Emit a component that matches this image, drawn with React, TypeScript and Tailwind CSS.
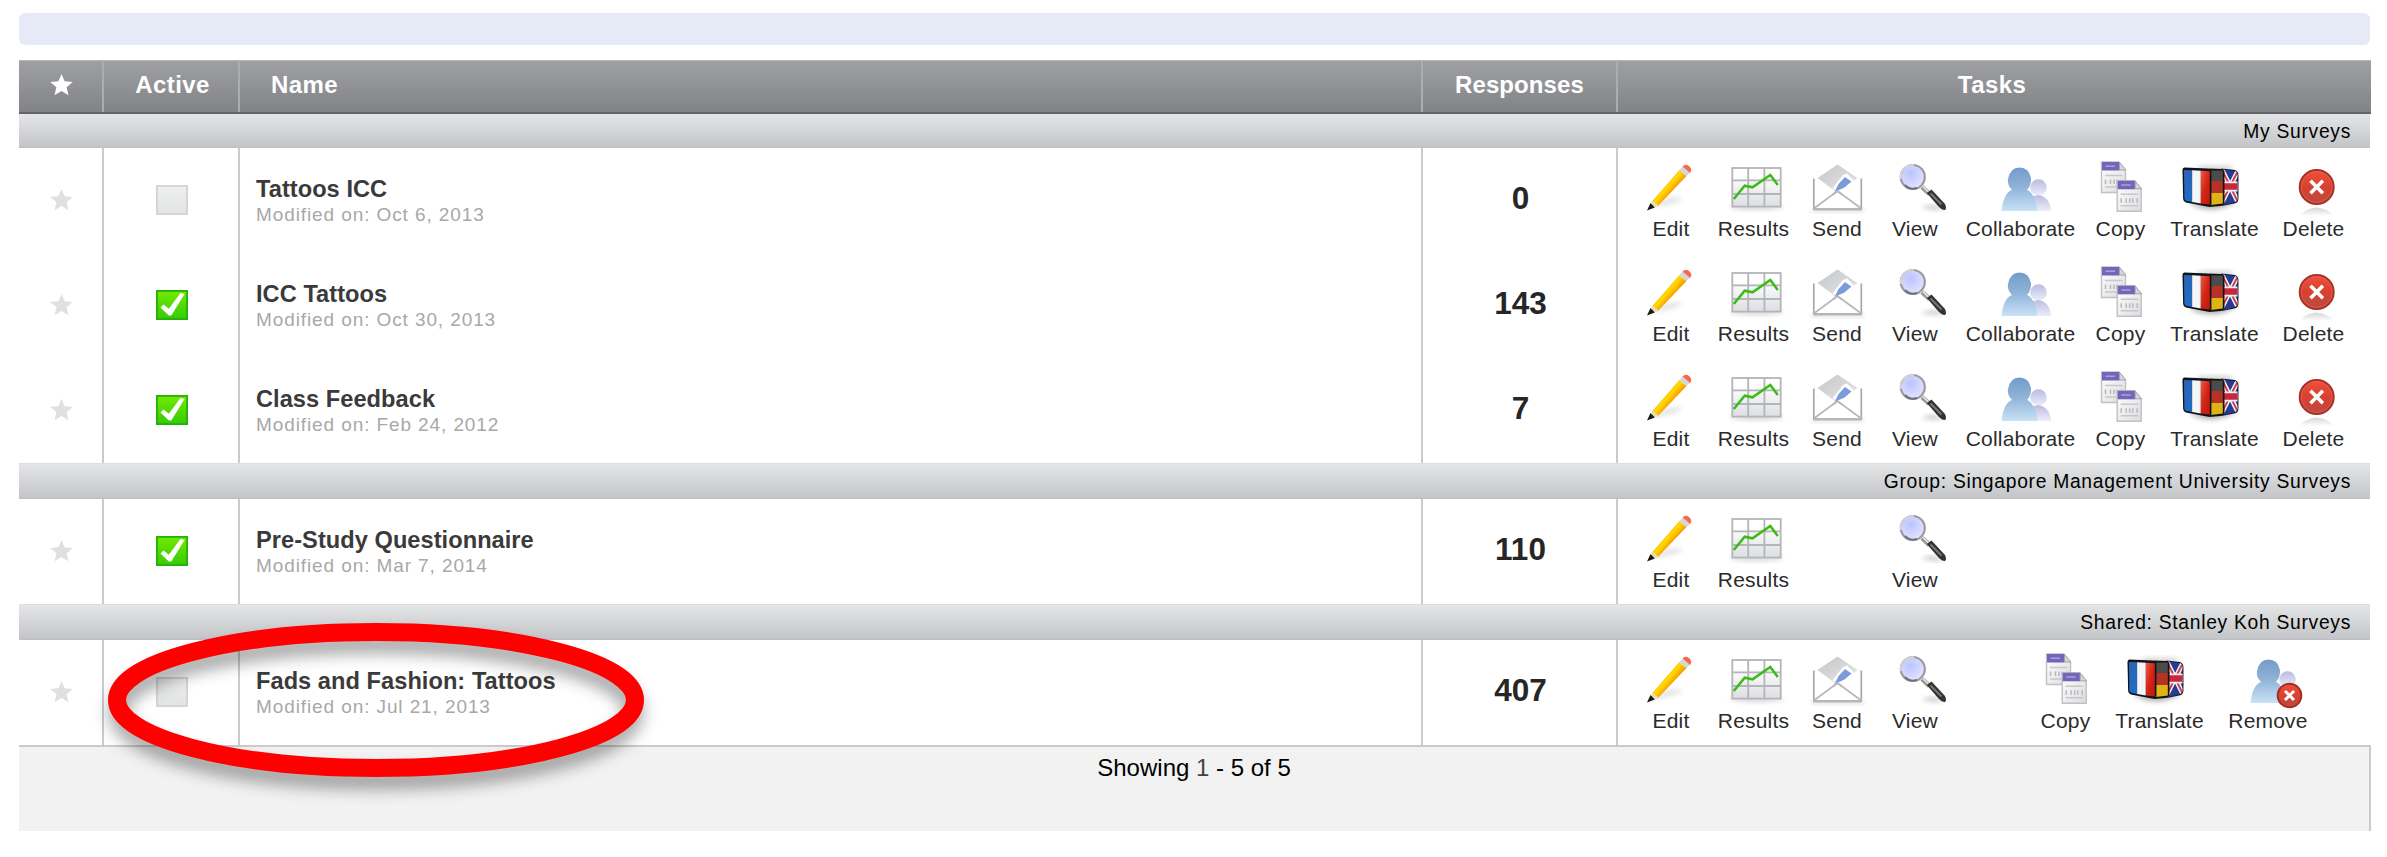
import React from "react";

type TaskName =
  | "Edit" | "Results" | "Send" | "View" | "Collaborate" | "Copy" | "Translate" | "Delete" | "Remove";

function Defs() {
  return (
    <svg className="absolute h-0 w-0" aria-hidden="true">
      <defs>
        <linearGradient id="pencil" gradientUnits="userSpaceOnUse" x1="26" y1="25" x2="34" y2="32">
          <stop offset="0" stopColor="#f2b400" />
          <stop offset="0.35" stopColor="#ffdc00" />
          <stop offset="0.6" stopColor="#ffc400" />
          <stop offset="1" stopColor="#f59a00" />
        </linearGradient>
        <linearGradient id="grid" x1="0" y1="0" x2="0" y2="1">
          <stop offset="0.2" stopColor="#ffffff" />
          <stop offset="1" stopColor="#dddee2" />
        </linearGradient>
        <linearGradient id="paper" x1="0" y1="0" x2="1" y2="1">
          <stop offset="0" stopColor="#c4c6c8" />
          <stop offset="1" stopColor="#e6e7e8" />
        </linearGradient>
        <radialGradient id="lens" cx="0.4" cy="0.35" r="0.7">
          <stop offset="0" stopColor="#b9c4ff" />
          <stop offset="1" stopColor="#e6e5ff" />
        </radialGradient>
        <linearGradient id="person" x1="0" y1="0" x2="0" y2="1">
          <stop offset="0" stopColor="#749cc9" />
          <stop offset="0.45" stopColor="#8fb2d8" />
          <stop offset="1" stopColor="#c8e2f6" />
        </linearGradient>
        <linearGradient id="friend" x1="0" y1="0" x2="0" y2="1">
          <stop offset="0" stopColor="#b9bce0" />
          <stop offset="1" stopColor="#eeedfb" />
        </linearGradient>
        <linearGradient id="sheet" x1="0" y1="0" x2="1" y2="1">
          <stop offset="0" stopColor="#ffffff" />
          <stop offset="1" stopColor="#dcdcdf" />
        </linearGradient>
        <linearGradient id="red" x1="0" y1="0" x2="0" y2="1">
          <stop offset="0" stopColor="#f0503c" />
          <stop offset="0.5" stopColor="#d8412f" />
          <stop offset="1" stopColor="#b94a40" />
        </linearGradient>
        <linearGradient id="mirror" x1="0" y1="0" x2="0" y2="1">
          <stop offset="0" stopColor="#d4d6d8" />
          <stop offset="1" stopColor="#ffffff" />
        </linearGradient>
        <linearGradient id="blueStripe" x1="0" y1="0" x2="0" y2="1">
          <stop offset="0" stopColor="#2a63b4" />
          <stop offset="1" stopColor="#1d6ec4" />
        </linearGradient>
        <linearGradient id="redStripe" x1="0" y1="0" x2="1" y2="1">
          <stop offset="0" stopColor="#ee5a4c" />
          <stop offset="0.5" stopColor="#d42414" />
          <stop offset="1" stopColor="#c01808" />
        </linearGradient>
        <linearGradient id="tick" x1="0" y1="0" x2="0" y2="1">
          <stop offset="0" stopColor="#72ea00" />
          <stop offset="1" stopColor="#35cb08" />
        </linearGradient>
        <linearGradient id="untick" x1="0" y1="0" x2="0" y2="1">
          <stop offset="0" stopColor="#efefef" />
          <stop offset="1" stopColor="#e1e3e4" />
        </linearGradient>
        <filter id="soft" x="-50%" y="-50%" width="200%" height="200%">
          <feGaussianBlur stdDeviation="2.4" />
        </filter>
        <clipPath id="flagClip">
          <path d="M42 10.5 L55 12 Q57.5 13 57.5 16 V40 Q57 43 54 43.5 L42 46Z" />
        </clipPath>
      </defs>
    </svg>
  );
}

function People() {
  return (
    <>
      <circle cx="49.5" cy="28.5" r="8.3" fill="url(#friend)" />
      <path d="M36 52 Q38 37 49 36 Q60 37 62.5 52Z" fill="url(#friend)" />
      <path d="M12.5 52 Q14.5 34 23 31 Q18 26 19 20 Q21 8.5 30.5 8.5 Q40 8.5 42 19 Q42.5 26 38 31 Q46 34 48.5 52Z" fill="url(#person)" />
    </>
  );
}

function Sheet({ x, y }: { x: number; y: number }) {
  return (
    <g transform={`translate(${x} ${y})`}>
      <path d="M0.5 0.5 H18 L24.5 9 V31 H0.5Z" fill="url(#sheet)" stroke="#c0c0c5" strokeWidth="1.4" />
      <rect x="1" y="0.5" width="17.5" height="8.5" fill="#7465b8" />
      <path d="M4.5 4.7 H14" stroke="#b4aadf" strokeWidth="1.3" />
      <path d="M18.5 1 V8.5 H25Z" fill="#d6d6da" stroke="#a4a4aa" />
      <path d="M4 14 H21.5 M4 25.5 H21.5" stroke="#c8c8cc" strokeWidth="1.5" />
      <path d="M4.5 18 V22.5 M9.5 18 V22.5 M13 18 V22.5 M16 18 V22.5 M20.5 18 V22.5" stroke="#b9b9bd" strokeWidth="1.5" />
    </g>
  );
}

function Drawing({ name }: { name: TaskName }) {
  switch (name) {
    case "Edit":
      return (
        <>
          <path d="M12 48 Q30 36 44 39 Q36 46 12 48Z" fill="#000" opacity="0.12" filter="url(#soft)" />
          <path d="M12.5 43 L40.5 11 L47.5 17 L18.5 47.5Z" fill="url(#pencil)" />
          <path d="M13.5 41.8 L20 46.8 L10.5 50.5Z" fill="#e9dfb4" />
          <path d="M8 51.5 L11.5 44 L15.8 48.6Z" fill="#1c1a18" />
          <path d="M40.5 11 L43.5 7.5 L51 14 L47.5 17Z" fill="#d3d6dc" />
          <path d="M43.5 7.5 Q46.5 4.5 50 7 Q54 10.5 51 14Z" fill="#f7694e" />
        </>
      );
    case "Results":
      return (
        <>
          <ellipse cx="34.5" cy="48" rx="27" ry="3" fill="#000" opacity="0.16" filter="url(#soft)" />
          <rect x="10.3" y="9" width="48.4" height="38.6" fill="url(#grid)" stroke="#b4b5ba" strokeWidth="1.8" />
          <path d="M26.2 9 V47.6 M42.4 9 V47.6 M10.3 21.3 H58.7 M10.3 35 H58.7" stroke="#b4b5ba" strokeWidth="1.8" />
          <path d="M11.8 40 L22.7 26.7 L30.5 28.3 L48.3 16 L55.8 26" fill="none" stroke="#38bd14" strokeWidth="2.5" />
        </>
      );
    case "Send":
      return (
        <>
          <rect x="6" y="50" width="53" height="3" fill="#000" opacity="0.14" filter="url(#soft)" />
          <path d="M12.5 19 L32.5 5.5 L52.5 19 L32.5 34Z" fill="url(#paper)" />
          <path d="M8.8 19.5 V50 H56.3 V19.5" fill="none" stroke="#a6a8aa" strokeWidth="1.7" />
          <path d="M8.8 49.5 L32.5 32 L56.3 49.5" fill="#fff" stroke="#b6b8ba" strokeWidth="1.8" />
          <path d="M8.5 50.2 H56.5" stroke="#b4b6b8" strokeWidth="2.4" />
          <path d="M27.5 29.5 L38 16 L42 14.5 L49 21.5 L35 34Z" fill="#fff" />
          <path d="M29.5 33 L33.5 25 L40 18 L46.5 22.5 L39.5 28.5Z" fill="#7d9bdc" />
          <path d="M28 35.5 L32.5 32 L37 35.5" fill="none" stroke="#b6b8ba" strokeWidth="1.8" />
        </>
      );
    case "View":
      return (
        <>
          <path d="M38 49 Q50 43 61 51Z" fill="#000" opacity="0.28" filter="url(#soft)" />
          <path d="M39 28 L46.5 35" stroke="#999" strokeWidth="4.5" />
          <path d="M40 27.5 L46 33.5" stroke="#ececec" strokeWidth="1.6" />
          <path d="M43.8 34 L48.5 30.5 L62 45 Q64 49.5 62 51 Q59.5 51.5 55.5 47.5Z" fill="#333" />
          <path d="M47.5 34.5 L58.5 45.5" stroke="#7a7a7a" strokeWidth="1.8" />
          <circle cx="29.8" cy="18" r="12" fill="url(#lens)" stroke="#9a9b9e" strokeWidth="2.2" />
          <path d="M18 20 A12 12 0 0 1 31 6.2" fill="none" stroke="#d4d5d8" strokeWidth="2" />
          <path d="M22 26 A11.5 11.5 0 0 0 34 29" fill="none" stroke="#707175" strokeWidth="2" />
        </>
      );
    case "Collaborate":
      return <People />;
    case "Remove":
      return (
        <g transform="translate(2 0)">
          <People />
          <circle cx="51.5" cy="44.5" r="11.8" fill="url(#red)" stroke="#a52d22" strokeWidth="2" />
          <path d="M47 40 L56 49 M56 40 L47 49" stroke="#fff" strokeWidth="3" />
        </g>
      );
    case "Copy":
      return (
        <>
          <Sheet x={12} y={2.5} />
          <Sheet x={27.7} y={21.3} />
        </>
      );
    case "Translate":
      return (
        <g transform="translate(-1 0) scale(0.965 1)">
          <path d="M6 44 Q32 58 58 42Z" fill="#000" opacity="0.3" filter="url(#soft)" />
          <path d="M20 7 H50 L54 12 H10Z" fill="#000" opacity="0.18" filter="url(#soft)" />
          <path d="M41 9.5 L55 11 Q58.5 12.5 58.5 16 V40 Q58 44 54 44.5 L41 47Z" fill="#171724" />
          <g clipPath="url(#flagClip)">
            <rect x="42" y="10" width="16" height="36" fill="#253c92" />
            <path d="M41 44 L58 12 M41 10 L58 43" stroke="#f5f2f5" strokeWidth="5" />
            <path d="M41 44 L58 12 M41 10 L58 43" stroke="#d03848" strokeWidth="2" />
            <path d="M41 27.5 H59" stroke="#f0eef2" strokeWidth="10" />
            <path d="M41 27.5 H59" stroke="#c6283c" strokeWidth="6.5" />
          </g>
          <path d="M28 9.5 L42 10 L44 12 V45 L40 47 L28 48Z" fill="#15120c" />
          <path d="M30 11.5 H42.3 V22 H30Z" fill="#4b4b4b" />
          <path d="M30 22 H42.3 V34 H30Z" fill="#b63126" />
          <path d="M30 34 H42.3 V44.5 L30 46Z" fill="#dcb414" />
          <path d="M2.5 8.5 L27 9.5 Q30.5 10 30.5 13 V45 Q30.5 48 27 47.8 L4 43.5 Q1.5 43 1.2 40 L0.5 11 Q0.5 8.5 2.5 8.5Z" fill="#10131a" />
          <path d="M2 11 L10.5 11.3 V43 L4 41.8 L2.5 40Z" fill="url(#blueStripe)" />
          <path d="M10.5 11.3 L19.5 11.7 V44.5 L10.5 43Z" fill="#f4f5f7" />
          <path d="M19.5 11.7 L28.8 12.2 V45.5 L19.5 44.5Z" fill="url(#redStripe)" />
        </g>
      );
    case "Delete":
      return (
        <>
          <path d="M18 57 Q22 49.5 34.5 48.5 Q47 49.5 51 57Z" fill="url(#mirror)" />
          <circle cx="34.7" cy="28" r="17" fill="url(#red)" stroke="#a73228" strokeWidth="2" />
          <circle cx="34.7" cy="28" r="15.5" fill="none" stroke="#ea6a58" strokeWidth="0.9" opacity="0.7" />
          <path d="M28.5 21.8 L40.9 34.2 M40.9 21.8 L28.5 34.2" stroke="#fff" strokeWidth="3.6" />
        </>
      );
  }
}

const slot: Record<TaskName, string> = {
  Edit: "ml-[35px] w-[36px]",
  Results: "ml-[28px] w-[73px]",
  Send: "ml-[22px] w-[50px]",
  View: "ml-[29px] w-[48px]",
  Collaborate: "ml-[26px] w-[111px]",
  Copy: "ml-[18px] w-[53px]",
  Translate: "ml-[21px] w-[93px]",
  Delete: "ml-[21px] w-[63px]",
  Remove: "ml-[21px] w-[82px]",
};

function Task({ name, className }: { name: TaskName; className?: string }) {
  return (
    <a className={`flex shrink-0 flex-col items-center ${className ?? slot[name]}`}>
      <svg width="64" height="58" viewBox="0 0 64 58" className="shrink-0 overflow-visible">
        <Drawing name={name} />
      </svg>
      <span className="whitespace-nowrap text-[21px] leading-6 tracking-[0.2px] text-[#2b2b2b]">{name}</span>
    </a>
  );
}

function Star({ className }: { className: string }) {
  return (
    <svg width="23" height="22" viewBox="0 0 23 22" className={className}>
      <path d="M11.5 0 L14.6 7.3 L22.8 8 L16.6 13.2 L18.5 21.3 L11.5 17 L4.5 21.3 L6.4 13.2 L0.2 8 L8.4 7.3Z" fill="currentColor" />
    </svg>
  );
}

function Check({ on }: { on: boolean }) {
  return (
    <svg width="32" height="30" viewBox="0 0 32 30">
      <rect x="0.9" y="0.9" width="30.2" height="28.2" fill={on ? "url(#tick)" : "url(#untick)"} stroke={on ? "#25b00c" : "#d3d4d4"} strokeWidth="1.8" />
      {on && <path d="M4.5 17.5 L7.5 14.5 L12.8 18.8 L24.5 3 L28.5 4 L15.3 25.6 L12.8 25.6Z" fill="#fff" />}
    </svg>
  );
}

const columns = "grid grid-cols-[85px_136px_1183px_195px_1fr]";

function Row({ on, name, date, count, last, children }: {
  on: boolean; name: string; date: string; count: number; last?: boolean; children: React.ReactNode;
}) {
  return (
    <div className={`${columns} bg-white ${last ? "h-[107px] border-b-2 border-[#cbcbcb]" : "h-[105px]"}`}>
      <div className="flex justify-center border-r-2 border-[#cbcbcb] pl-px pt-[41px]"><Star className="text-[#e0e0e0]" /></div>
      <div className="flex justify-center border-r-2 border-[#cbcbcb] pl-[2px] pt-[37px]"><Check on={on} /></div>
      <div className="border-r-2 border-[#cbcbcb] pl-[16px] pt-[29px]">
        <div className="text-[23.6px] font-bold leading-6 tracking-[0.05px] text-[#3a3a3a]">{name}</div>
        <div className="mt-[4px] text-[19px] leading-5 tracking-[0.9px] text-[#a8a8a8]">{date}</div>
      </div>
      <div className="border-r-2 border-[#cbcbcb] pl-[2px] pt-[34px] text-center text-[31.5px] font-bold leading-8 text-[#262626]">{count}</div>
      <div className="flex pt-[11px]">{children}</div>
    </div>
  );
}

function Group({ label, first }: { label: string; first?: boolean }) {
  return (
    <div className={`mr-[1px] flex justify-end border-b border-[#bfc0c2] bg-linear-to-b from-[#e3e5e6] to-[#c4c5c8] pr-[19px] text-[19.3px] leading-6 tracking-[0.7px] text-black ${first ? "h-[34px] pt-[6px]" : "h-[36px] border-t border-t-[#dcdddd] pt-[6px]"}`}>
      {label}
    </div>
  );
}

const allTasks: TaskName[] = ["Edit", "Results", "Send", "View", "Collaborate", "Copy", "Translate", "Delete"];

export default function App() {
  const everything = allTasks.map((t) => <Task key={t} name={t} />);
  return (
    <div className="relative h-[857px] w-[2387px] overflow-hidden bg-white font-['Liberation_Sans',Arial,sans-serif]">
      <Defs />
      <div className="ml-[19px] w-[2352px] pt-[13px]">
        <div className="mr-[1px] h-8 rounded-md bg-[#e6eaf6]" />
        <div className={`${columns} mt-[15px] h-[54px] border-b-2 border-t border-b-[#646567] border-t-[#b5b6b7] bg-linear-to-b from-[#9fa0a2] to-[#828387] text-[24px] font-bold leading-6 text-white`}>
          <div className="flex justify-center border-r-2 border-[#acadae] pl-px pt-[13px]"><Star className="text-white" /></div>
          <div className="border-r-2 border-[#acadae] pl-[3px] pt-[12px] text-center tracking-[0.4px]">Active</div>
          <div className="border-r-2 border-[#acadae] pl-[31px] pt-[12px] tracking-[0.4px]">Name</div>
          <div className="border-r-2 border-[#acadae] pt-[12px] text-center tracking-[0.1px]">Responses</div>
          <div className="pr-[5px] pt-[12px] text-center tracking-[0.4px]">Tasks</div>
        </div>
        <Group label="My Surveys" first />
        <Row on={false} name="Tattoos ICC" date="Modified on: Oct 6, 2013" count={0}>{everything}</Row>
        <Row on name="ICC Tattoos" date="Modified on: Oct 30, 2013" count={143}>{everything}</Row>
        <Row on name="Class Feedback" date="Modified on: Feb 24, 2012" count={7}>{everything}</Row>
        <Group label="Group: Singapore Management University Surveys" />
        <Row on name="Pre-Study Questionnaire" date="Modified on: Mar 7, 2014" count={110}>
          <Task name="Edit" />
          <Task name="Results" />
          <Task name="View" className="ml-[101px] w-[48px]" />
        </Row>
        <Group label="Shared: Stanley Koh Surveys" />
        <Row on={false} name="Fads and Fashion: Tattoos" date="Modified on: Jul 21, 2013" count={407} last>
          <Task name="Edit" />
          <Task name="Results" />
          <Task name="Send" />
          <Task name="View" />
          <Task name="Copy" className="ml-[100px] w-[53px]" />
          <Task name="Translate" />
          <Task name="Remove" />
        </Row>
        <div className="h-[84px] border-r-2 border-[#cbcbcb] bg-[#f2f2f2] pt-[9px] text-center text-[24px] leading-6 text-black">
          Showing <span className="text-[#444]">1</span> - 5 of 5
        </div>
      </div>
      <svg className="absolute left-[80px] top-[600px] overflow-visible" width="600" height="230" viewBox="80 600 600 230">
        <ellipse cx="376" cy="712" rx="258" ry="68" fill="none" stroke="#000" strokeOpacity="0.36" strokeWidth="18" className="blur-[8px]" />
        <ellipse cx="376" cy="700" rx="259" ry="68" fill="none" stroke="#ff0000" strokeWidth="18" />
      </svg>
    </div>
  );
}
